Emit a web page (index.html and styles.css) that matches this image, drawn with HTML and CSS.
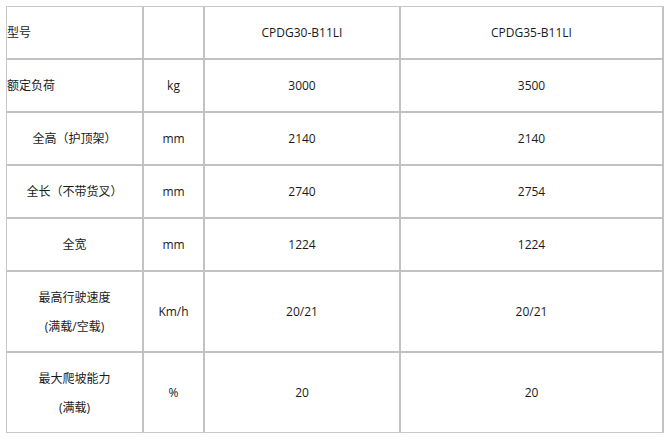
FILE: index.html
```html
<!DOCTYPE html>
<html lang="zh-CN">
<head>
<meta charset="utf-8">
<title>参数表</title>
<link rel="stylesheet" href="styles.css">
</head>
<body>
<div class="page">
<table class="spec">
  <colgroup>
    <col class="c-name">
    <col class="c-unit">
    <col class="c-a">
    <col class="c-b">
  </colgroup>
  <tbody>
    <tr class="row">
      <td class="left">型号</td>
      <td></td>
      <td>CPDG30-B11LI</td>
      <td class="last">CPDG35-B11LI</td>
    </tr>
    <tr class="row">
      <td class="left">额定负荷</td>
      <td>kg</td>
      <td>3000</td>
      <td class="last">3500</td>
    </tr>
    <tr class="row">
      <td>全高（护顶架）</td>
      <td>mm</td>
      <td>2140</td>
      <td class="last">2140</td>
    </tr>
    <tr class="row">
      <td>全长（不带货叉）</td>
      <td>mm</td>
      <td>2740</td>
      <td class="last">2754</td>
    </tr>
    <tr class="row">
      <td>全宽</td>
      <td>mm</td>
      <td>1224</td>
      <td class="last">1224</td>
    </tr>
    <tr class="row tall">
      <td><p class="line">最高行驶速度</p><p class="line">(满载/空载)</p></td>
      <td>Km/h</td>
      <td>20/21</td>
      <td class="last">20/21</td>
    </tr>
    <tr class="row tall end">
      <td><p class="line">最大爬坡能力</p><p class="line">(满载)</p></td>
      <td>%</td>
      <td>20</td>
      <td class="last">20</td>
    </tr>
  </tbody>
</table>
</div>
</body>
</html>
```

FILE: styles.css
```css
html, body {
  margin: 0;
  padding: 0;
  background: #ffffff;
}

.page {
  padding: 6px 0 0 6px;
}

.spec {
  border-collapse: separate;
  border-spacing: 0;
  table-layout: fixed;
  width: 657px;
  border-top: 1px solid #c8c8c8;
  border-left: 1px solid #c8c8c8;
  font-family: "Open Sans", "Noto Sans CJK SC", sans-serif;
  font-size: 12px;
  color: #1a1a1a;
}

.c-name { width: 137px; }
.c-unit { width: 61px; }
.c-a { width: 196px; }
.c-b { width: 263px; }

.spec td {
  padding: 0;
  text-align: center;
  vertical-align: middle;
  border-right: 2px solid #c2c2c2;
  border-bottom: 2px solid #c2c2c2;
  line-height: 16px;
  white-space: nowrap;
}

.spec td.left {
  text-align: left;
}

.row td {
  height: 51px;
}

.row:first-child td {
  height: 51px;
}

.row.tall td {
  height: 79px;
}

.row.end td {
  height: 79px;
  border-bottom: 1px solid #c8c8c8;
}

.line {
  margin: 0;
  line-height: 29px;
}
```
